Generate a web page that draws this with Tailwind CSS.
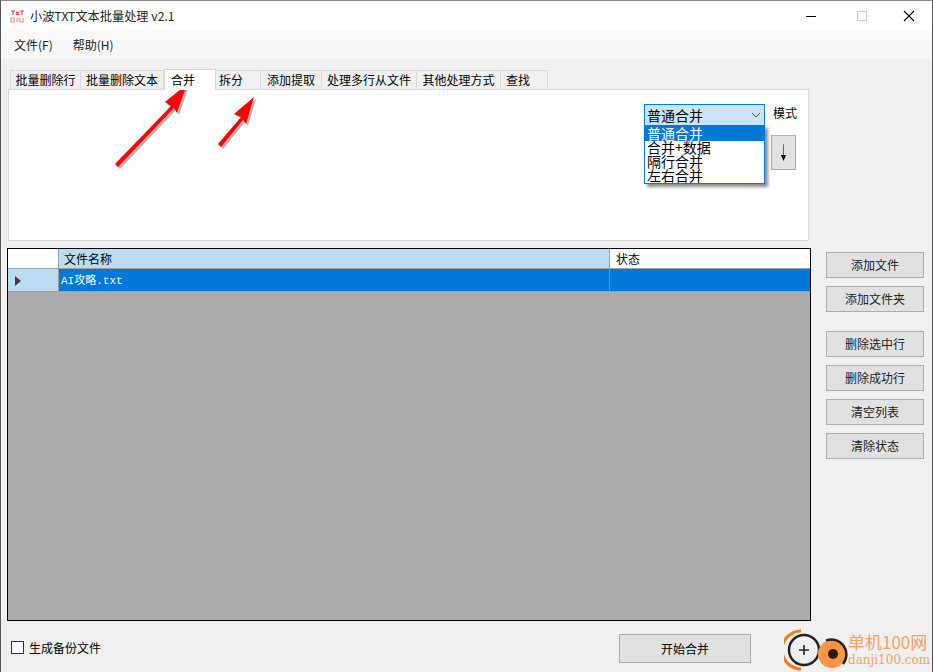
<!DOCTYPE html>
<html><head><meta charset="utf-8"><script src="https://cdn.jsdelivr.net/npm/@tailwindcss/browser@4"></script></head>
<body class="m-0 bg-[#f0f0f0]">
<div class="relative w-[933px] h-[672px] overflow-hidden bg-[#f0f0f0] text-black border-l border-r border-t border-l-[#555] border-r-[#555] border-t-[#888] font-['Noto_Sans_CJK_SC','Noto_Sans',sans-serif]">
  <!-- title bar -->
  <div class="h-[30px] bg-white flex items-center">
    <svg class="ml-[9px] w-[15px] h-[15px]" viewBox="0 0 15 15"><g fill="none" stroke="#e04040" stroke-width="1.2"><path d="M1 2h4M3 2v4M6 3l3 3M9 3L6 6M10 2h4M12 2v4"/><path d="M1 9h3v4H1zM6 10h3M6 12h3M10 9v4h3V9" stroke="#e88"/></g></svg>
    <span class="ml-[5px] text-[12.2px] leading-none font-['Noto_Sans_CJK_SC'] text-[#222]">小波TXT文本批量处理 v2.1</span>
    <div class="ml-auto flex items-center h-full mr-[1px]">
      <svg class="w-[46px] h-[30px]" viewBox="0 0 46 30"><path d="M13 15.5h10" stroke="#000" stroke-width="1"/></svg>
      <svg class="w-[46px] h-[30px]" viewBox="0 0 46 30"><rect x="18.5" y="10.5" width="9" height="9" fill="none" stroke="#ccc"/></svg>
      <svg class="w-[46px] h-[30px]" viewBox="0 0 46 30"><path d="M19 10l10 10M29 10L19 20" stroke="#000" stroke-width="1.1"/></svg>
    </div>
  </div>
  <!-- menu -->
  <div class="h-[28px] bg-gradient-to-b from-[#fafafa] to-[#f6f6f6] flex items-center text-[12px] text-[#222]">
    <span class="ml-[13px]">文件(F)</span>
    <span class="ml-[20px]">帮助(H)</span>
  </div>
  <!-- tabs -->
  <div class="pl-[7px] pr-[123px]">
    <div class="h-[30px] flex items-end pl-[2px] text-[12px] leading-none">
      <div class="w-[71px] h-[19px] border border-b-0 border-[#d9d9d9] bg-[#f0f0f0] flex items-center justify-center">批量删除行</div>
      <div class="w-[83px] h-[19px] border border-l-0 border-b-0 border-[#d9d9d9] bg-[#f0f0f0] flex items-center justify-center">批量删除文本</div>
      <div class="relative z-10 -mb-px w-[52px] h-[21px] border border-b-0 border-[#d9d9d9] bg-white flex items-center pl-[6px]">合并</div>
      <div class="w-[45px] h-[19px] border border-l-0 border-b-0 border-[#d9d9d9] bg-[#f0f0f0] flex items-center pl-[3px]">拆分</div>
      <div class="w-[61px] h-[19px] border border-l-0 border-b-0 border-[#d9d9d9] bg-[#f0f0f0] flex items-center justify-center">添加提取</div>
      <div class="w-[95px] h-[19px] border border-l-0 border-b-0 border-[#d9d9d9] bg-[#f0f0f0] flex items-center justify-center">处理多行从文件</div>
      <div class="w-[84px] h-[19px] border border-l-0 border-b-0 border-[#d9d9d9] bg-[#f0f0f0] flex items-center justify-center">其他处理方式</div>
      <div class="w-[47px] h-[19px] border border-l-0 border-b-0 border-[#d9d9d9] bg-[#f0f0f0] flex items-center pl-[5px]">查找</div>
    </div>
    <!-- panel -->
    <div class="h-[152px] w-[801px] border border-[#d9d9d9] bg-white flex justify-end">
      <div class="w-[121px] mt-[14px] h-[22px] border border-[#0078d7] bg-[#cce4f7] flex items-center pl-[2px] pr-[3px] text-[14px] leading-none mr-[43px]">
        <span>普通合并</span>
        <svg class="ml-auto w-[10px] h-[6px]" viewBox="0 0 10 6"><path d="M1 1l4 4 4-4" fill="none" stroke="#555"/></svg>
      </div>
    </div>
  </div>
  <!-- middle -->
  <div class="flex mt-[7px] pl-[6px]">
    <div class="w-[804px] h-[373px] border border-black bg-[#ababab] flex flex-col">
      <div class="h-[20px] flex text-[12px] leading-none border-b border-[#a0a0a0]">
        <div class="w-[50px] bg-white"></div>
        <div class="w-[551px] bg-[#bcdcf4] border-l border-[#a0a0a0] flex items-center pl-[5px]">文件名称</div>
        <div class="flex-1 bg-white border-l border-[#a0a0a0] flex items-center pl-[6px]">状态</div>
      </div>
      <div class="h-[23px] flex border-b border-[#a0a0a0]">
        <div class="w-[50px] bg-[#bcdcf4] flex items-center pl-[7px] pt-[2px]">
          <svg class="w-[6px] h-[10px]" viewBox="0 0 6 10"><path d="M0 0l6 5-6 5z" fill="#404040"/></svg>
        </div>
        <div class="w-[551px] bg-[#0078d7] border-l border-[#a0a0a0] flex items-center pl-[2px] pt-[2px] text-white text-[11px] leading-none font-['Liberation_Mono','Noto_Sans_CJK_SC',monospace]">AI攻略.txt</div>
        <div class="flex-1 bg-[#0078d7] border-l border-[#3f9be0]"></div>
      </div>
    </div>
    <!-- side buttons -->
    <div class="ml-[15px] mt-[4px] w-[98px] flex flex-col text-[12px] leading-none text-[#222]">
      <button class="h-[26px] w-full border border-[#adadad] bg-[#e1e1e1]">添加文件</button>
      <button class="h-[26px] w-full mt-[8px] border border-[#adadad] bg-[#e1e1e1]">添加文件夹</button>
      <button class="h-[26px] w-full mt-[19px] border border-[#adadad] bg-[#e1e1e1]">删除选中行</button>
      <button class="h-[26px] w-full mt-[8px] border border-[#adadad] bg-[#e1e1e1]">删除成功行</button>
      <button class="h-[26px] w-full mt-[8px] border border-[#adadad] bg-[#e1e1e1]">清空列表</button>
      <button class="h-[26px] w-full mt-[8px] border border-[#adadad] bg-[#e1e1e1]">清除状态</button>
    </div>
  </div>
  <!-- bottom -->
  <div class="flex items-center mt-[13px] pl-[10px] h-[29px]">
    <span class="w-[13px] h-[13px] mb-[2px] border border-[#333] bg-white"></span>
    <span class="ml-[5px] mb-[2px] text-[12px] leading-none">生成备份文件</span>
    <button class="ml-[518px] w-[132px] h-[29px] border border-[#adadad] bg-[#e1e1e1] text-[12px] leading-none">开始合并</button>
  </div>

  <!-- overlays -->
  <span class="absolute left-[772px] top-[106px] text-[12px] leading-none">模式</span>
  <div class="absolute left-[770px] top-[134px] w-[25px] h-[35px] border border-[#adadad] bg-[#e1e1e1] flex items-center justify-center">
    <svg class="w-[7px] h-[18px]" viewBox="0 0 7 18"><path d="M3.5 0v12" stroke="#c8822c" stroke-width="1"/><path d="M3.5 1v11" stroke="#333" stroke-width=".4"/><path d="M1 11h5l-2.5 6z" fill="#000"/></svg>
  </div>
  <div class="absolute left-[643px] top-[124px] w-[121px] h-[59px] border border-[#0078d7] bg-white overflow-hidden text-[14px] shadow-[3px_3px_3px_rgba(0,0,0,0.45)]">
    <div class="h-[15px] leading-[14px] bg-[#0078d7] text-white pl-[2px]">普通合并</div>
    <div class="h-[14px] leading-[12px] pl-[2px]">合并+数据</div>
    <div class="h-[14px] leading-[12px] pl-[2px]">隔行合并</div>
    <div class="h-[14px] leading-[12px] pl-[2px]">左右合并</div>
  </div>
  <!-- red arrows -->
  <svg class="absolute left-0 top-0 w-[300px] h-[180px] pointer-events-none" viewBox="0 0 300 180">
    <g fill="#000" opacity=".3" transform="translate(2,2)">
      <path d="M114 163L170 105L164 101L186 83L176 112L173 107L117 166Z"/>
      <path d="M217 143L240 116L233 113L253 96L245 123L242 119L220 146Z"/>
    </g>
    <path d="M114 163L170 105L164 101L186 83L176 112L173 107L117 166Z" fill="#f00"/>
    <path d="M217 143L240 116L233 113L253 96L245 123L242 119L220 146Z" fill="#f00"/>
  </svg>
  <!-- watermark logo -->
  <svg class="absolute left-[783px] top-[627px] w-[68px] h-[44px]" viewBox="0 0 68 44">
    <path d="M17 3A19 19 0 0 0 17 41" fill="none" stroke="#f47a1c" stroke-width="3"/>
    <circle cx="20" cy="22" r="15" fill="#f0f0f0" stroke="#222" stroke-width="2.5"/>
    <path d="M15 22h10M20 17v10" stroke="#222" stroke-width="1.6"/>
    <circle cx="48" cy="26" r="14" fill="#ff9447"/>
    <path d="M42 12.5A15 15 0 0 1 59 36" fill="none" stroke="#222" stroke-width="2.4"/>
    <circle cx="49" cy="26" r="5" fill="#2a1d14"/>
  </svg>
  <div class="absolute left-[847px] top-[631px] flex flex-col items-start text-[#fb9e62] leading-none">
    <span class="text-[17px] leading-[20px] font-['Noto_Sans_CJK_SC']">单机100网</span>
    <span class="text-[12px] leading-[14px] font-['DejaVu_Serif',serif] mt-[1px]">danji100.com</span>
  </div>
</div>
</body></html>
